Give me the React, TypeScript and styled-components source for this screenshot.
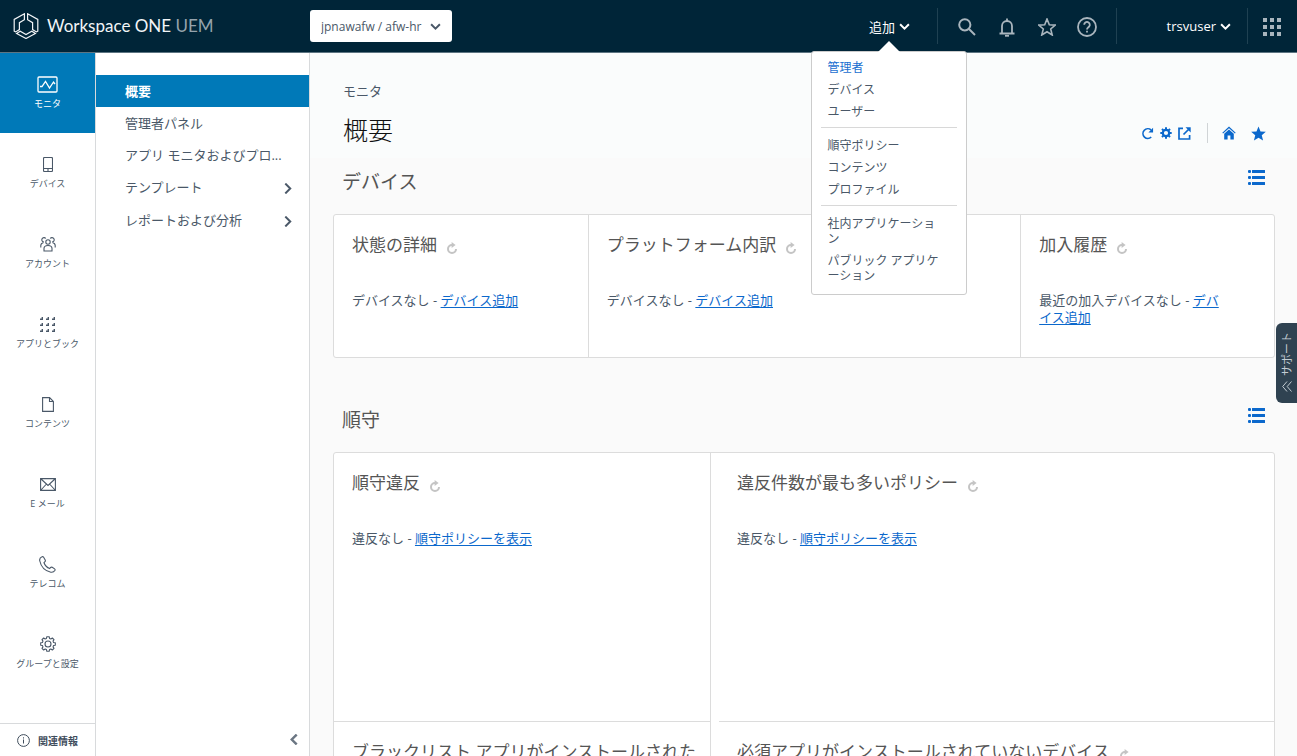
import React, { useState } from 'react';
import styled, { createGlobalStyle, css } from 'styled-components';

const GlobalStyle = createGlobalStyle`
  * { box-sizing: border-box; }
  body {
    margin: 0;
    font-family: "Open Sans", "Noto Sans CJK JP", sans-serif;
    font-size: 13px;
    color: #4a5868;
    background: #fafafa;
  }
  button, select { font: inherit; color: inherit; }
  button { border: 0; padding: 0; background: none; cursor: pointer; }
  ul { list-style: none; margin: 0; padding: 0; }
  h1, h2, h3, p { margin: 0; font-weight: 400; }
  svg { display: block; flex: none; }
`;

const Shell = styled.div`
  display: flex;
  flex-direction: column;
  height: 100vh;
  overflow: hidden;
`;

/* ---------- header ---------- */

const Header = styled.header`
  display: flex;
  align-items: center;
  flex: none;
  height: 53px;
  background: #002538;
  border-bottom: 1px solid #5d7582;
  color: #fff;
`;

const Brand = styled.a`
  display: flex;
  align-items: center;
  gap: 8px;
  flex: none;
  width: 310px;
  padding-left: 13px;
  color: #f2f5f7;
  font-family: Lato, "Open Sans", sans-serif;
  font-size: 17px;
  line-height: 24px;
  text-decoration: none;
  white-space: nowrap;
`;

const BrandSuffix = styled.span`
  color: #95a3ac;
`;

const OrgPicker = styled.label`
  position: relative;
  display: flex;
  align-items: center;
  height: 32px;
  background: #fff;
  border-radius: 3px;
  color: #4a5868;
  font-size: 12px;

  select {
    appearance: none;
    width: 142px;
    height: 32px;
    padding: 0 20px 0 11px;
    border: 0;
    background: transparent;
  }

  svg {
    position: absolute;
    right: 11px;
    pointer-events: none;
  }
`;

const HeaderTools = styled.div`
  display: flex;
  align-items: center;
  margin-left: auto;
  height: 36px;
`;

const HeaderGroup = styled.div`
  display: flex;
  align-items: center;
  height: 36px;
  padding: 0 9px;
  border-left: 1px solid #1f4152;
`;

const IconButton = styled.button`
  display: flex;
  align-items: center;
  justify-content: center;
  width: 40px;
  height: 36px;
  padding-top: 2px;
  color: #a9b5bd;
`;

const TextButton = styled.button`
  display: flex;
  align-items: center;
  gap: 4px;
  height: 36px;
  color: #fff;
`;

const AddWrap = styled.div`
  position: relative;
  margin-right: 27px;
`;

const UserGroup = styled(HeaderGroup)`
  justify-content: flex-end;
  min-width: 131px;
  padding: 0 16px;
`;

const AppsGroup = styled(HeaderGroup)`
  padding: 0 5px 0 4px;
`;

const Menu = styled.div`
  position: absolute;
  z-index: 10;
  top: 43px;
  left: 50%;
  width: 156px;
  padding: 5px 9px 7px;
  transform: translateX(-50%);
  background: #fff;
  border: 1px solid #ccc;
  border-radius: 3px;
  color: #4a5868;
  font-size: 12px;
  line-height: 15px;
  line-break: normal;

  &::before {
    content: "";
    position: absolute;
    top: -11px;
    left: 50%;
    margin-left: -11px;
    border: 11px solid transparent;
    border-top: 0;
    border-bottom-color: #fff;
  }

  ul + ul {
    margin-top: 4px;
    padding-top: 7px;
    border-top: 1px solid #d8d8d8;
  }
`;

const MenuLink = styled.a<{ $active?: boolean }>`
  display: block;
  padding: 3px 15px 4px 6px;
  color: ${(p) => (p.$active ? '#1a6fd0' : 'inherit')};
  text-decoration: none;
`;

/* ---------- navigation ---------- */

const Body = styled.div`
  display: flex;
  flex: 1;
  min-height: 0;
`;

const Rail = styled.nav`
  display: flex;
  flex-direction: column;
  flex: none;
  width: 96px;
  background: #fff;
  border-right: 1px solid #d8dadc;
`;

const RailLink = styled.a<{ $active?: boolean }>`
  display: flex;
  flex-direction: column;
  align-items: center;
  justify-content: center;
  gap: 4px;
  height: 80px;
  padding-bottom: 2px;
  color: #4a5868;
  font-size: 9px;
  line-height: 12px;
  text-decoration: none;
  ${(p) =>
    p.$active &&
    css`
      background: #0079b8;
      color: #fff;
    `}
`;

const RailIcon = styled.span`
  display: flex;
  align-items: center;
  justify-content: center;
  height: 20px;
`;

const AboutLink = styled.a`
  display: flex;
  align-items: center;
  gap: 8px;
  height: 33px;
  margin-top: auto;
  padding-left: 17px;
  border-top: 1px solid #d8dadc;
  color: #3f4d5c;
  font-size: 10px;
  font-weight: 700;
  text-decoration: none;
`;

const SubNav = styled.nav`
  display: flex;
  flex-direction: column;
  flex: none;
  width: 214px;
  padding-top: 22px;
  background: #fff;
  border-right: 1px solid #d8dadc;
`;

const SubLink = styled.a<{ $active?: boolean; $group?: boolean }>`
  display: flex;
  align-items: center;
  justify-content: space-between;
  height: ${(p) => (p.$group ? 33 : 32)}px;
  padding: 0 16px 2px 29px;
  color: #4a5868;
  text-decoration: none;
  white-space: nowrap;
  ${(p) =>
    p.$active &&
    css`
      background: #0079b8;
      color: #fff;
      font-weight: 700;
    `}

  svg {
    margin-top: 3px;
  }
`;

const CollapseButton = styled.button`
  display: flex;
  align-items: center;
  justify-content: center;
  align-self: flex-end;
  width: 30px;
  height: 33px;
  margin-top: auto;
  color: #6b7683;
`;

/* ---------- content ---------- */

const Main = styled.main`
  flex: 1;
  min-width: 0;
  overflow-y: auto;
  scrollbar-width: none;
`;

const PageHead = styled.div`
  display: flex;
  align-items: flex-end;
  justify-content: space-between;
  height: 105px;
  padding: 0 31px 9px 33px;
  background: #fafcfc;
`;

const Crumb = styled.p`
  line-height: 20px;
`;

const PageTitle = styled.h1`
  margin-top: 10px;
  color: #111;
  font-size: 25px;
  font-weight: 300;
  line-height: 38px;
`;

const Actions = styled.div`
  display: flex;
  align-items: center;
  height: 32px;
  color: #0b68cc;
`;

const ActionSet = styled.div`
  display: flex;
  align-items: center;
  gap: 6px;

  & + & {
    gap: 15px;
    height: 20px;
    margin-left: 16px;
    padding-left: 14px;
    border-left: 1px solid #d0d4d6;
  }
`;

const Section = styled.section`
  padding: 0 22px 0 23px;
  margin-bottom: 38px;
`;

const SectionHead = styled.div`
  display: flex;
  align-items: flex-start;
  justify-content: space-between;
  height: 56px;
  padding: 10px 10px 0 9px;
  color: #0b68cc;

  button {
    padding: 2px 0;
  }
`;

const SectionTitle = styled.h2`
  color: #555;
  font-size: 19px;
  line-height: 28px;
`;

const Panel = styled.div<{ $columns: string }>`
  display: grid;
  grid-template-columns: ${(p) => p.$columns};
  background: #fff;
  border: 1px solid #dcdcdc;
  border-radius: 3px;
`;

const Cell = styled.article<{ $tall?: boolean }>`
  min-height: ${(p) => (p.$tall ? 268 : 142)}px;
  padding: 17px 10px 0 18px;

  & + & {
    border-left: 1px solid #dcdcdc;
  }
`;

const Column = styled.div<{ $inset?: boolean }>`
  padding-left: ${(p) => (p.$inset ? 8 : 0)}px;

  & + & {
    border-left: 1px solid #dcdcdc;
  }

  ${Cell} + ${Cell} {
    border-left: 0;
    border-top: 1px solid #dcdcdc;
  }
`;

const CellTitle = styled.h3`
  color: #555;
  font-size: 17px;
  line-height: 26px;

  button {
    display: inline-block;
    margin-left: 9px;
    line-height: 12px;
    vertical-align: -3px;
    color: #c4c4c4;
  }
`;

const CellText = styled.p`
  margin-top: 34px;
  padding-right: 40px;
  line-height: 17px;
`;

const Link = styled.a`
  color: #0b68cc;
  text-decoration: underline;
  text-underline-offset: 2px;
`;

const SupportTab = styled.button`
  position: fixed;
  z-index: 5;
  top: 323px;
  right: 0;
  display: flex;
  flex-direction: column;
  align-items: center;
  justify-content: space-between;
  width: 21px;
  height: 80px;
  padding: 9px 0 11px;
  background: #2f4251;
  border-radius: 6px 0 0 6px;
  color: #c3ccd3;
  font-size: 11px;
  line-height: 16px;

  span {
    writing-mode: vertical-rl;
    text-orientation: sideways;
    transform: rotate(180deg);
  }
`;

/* ---------- icons ---------- */

type StrokeProps = { size?: number; w?: number; h?: number; box: string; sw?: number; children: React.ReactNode };

const Line = ({ size = 16, w, h, box, sw = 1, children }: StrokeProps) => (
  <svg width={w ?? size} height={h ?? size} viewBox={box} fill="none" stroke="currentColor" strokeWidth={sw} aria-hidden="true">
    {children}
  </svg>
);

const Chevron = ({ dir = 'down', size = 11, sw = 1.8 }: { dir?: 'down' | 'right' | 'left'; size?: number; sw?: number }) => {
  const d = { down: 'M1 3l4 4 4-4', right: 'M3 .5l4.500 4.500-4.500 4.500', left: 'M7 .5L2.500 5L7 9.500' }[dir];
  return (
    <Line size={size} box="0 0 10 10" sw={sw}>
      <path d={d} />
    </Line>
  );
};

const Logo = () => (
  <Line w={26} h={26} box="0 0 26 26" sw={1.2}>
    <path d="M11.400 .8L1.200 6.400V18.200l1.400.7 3.800-2.300V9.700l5-3z" />
    <path d="M14.600 .8L24.800 6.400V18.200l-1.400.7-3.800-2.300V9.700l-5-3z" />
    <path d="M3.600 20.500l3.600-2.200 5.800 3.200 5.800-3.200 3.600 2.200-9.400 5z" />
  </Line>
);

const GearPath = ({ cx = 8, cy = 8, outer = 7.4, inner = 5.8 }) => {
  const points: string[] = [];
  for (let i = 0; i < 8; i += 1) {
    [[-0.27, inner], [-0.16, outer], [0.16, outer], [0.27, inner]].forEach(([offset, r]) => {
      const a = (i * Math.PI) / 4 + offset;
      points.push(`${(cx + r * Math.sin(a)).toFixed(2)},${(cy - r * Math.cos(a)).toFixed(2)}`);
    });
  }
  return <polygon points={points.join(' ')} strokeLinejoin="round" />;
};

const railIcons: Record<string, React.ReactNode> = {
  monitor: (
    <Line w={21} h={17} box="0 0 21 17" sw={1.3}>
      <rect x="1" y="1" width="19" height="15" rx="1" />
      <path d="M3 10.500h2l3.500-5 4 6.500 4-6 1.500 2" />
    </Line>
  ),
  device: (
    <Line w={10} h={15} box="0 0 10 15" sw={1.1}>
      <rect x="0.5" y="0.5" width="9" height="14" rx="1" />
      <path d="M.5 11.500h9M5 12v2" />
    </Line>
  ),
  account: (
    <Line w={16} h={15} box="0 0 16 15" sw={1.1}>
      <circle cx="8" cy="5" r="2.200" />
      <path d="M4 14V11.500a4 3 0 018 0V14zM4 5A2.200 2.200 0 115.800 1.500M12 5a2.200 2.200 0 10-1.800-3.500M.8 10.500V8.500a3 3 0 012.500-2.800M15.200 10.500V8.500a3 3 0 00-2.500-2.800" />
    </Line>
  ),
  apps: (
    <svg width="15" height="15" viewBox="0 0 15 15" fill="currentColor" aria-hidden="true">
      {[0, 6, 12].map((y) => [0, 6, 12].map((x) => <path key={`${x}-${y}`} d={`M${x + 3} ${y}v3h-3v-1.400h1.600V${y}z`} />))}
    </svg>
  ),
  content: (
    <Line w={12} h={15} box="0 0 12 15" sw={1.1}>
      <path d="M.6.6h7l3.800 3.900v9.900H.6zM7.500.5v4h4" />
    </Line>
  ),
  mail: (
    <Line w={16} h={13} box="0 0 16 13" sw={1.1}>
      <path d="M.6.6h14.800v11.800H.6zM.5.5L8 7.500l7.500-7M.5 12.500l5.500-6M15.500 12.500l-5.500-6" />
    </Line>
  ),
  telecom: (
    <Line w={17} h={17} box="0 0 17 17" sw={1.1}>
      <path d="M3 .8C1.200 1.500.3 3 .8 5c1.200 5.500 5.500 10 11 11.200 1.800.3 3.300-.4 4.200-1.900.3-.6.1-1-.4-1.400l-2.400-1.600c-.6-.4-1.100-.3-1.600.2l-.9 1c-2.700-1-4.800-3.200-5.700-5.800l1-1c.5-.5.500-1 .2-1.600L4.500 1.100C4.100.6 3.600.5 3 .8z" />
    </Line>
  ),
  settings: (
    <Line size={16} box="0 0 16 16" sw={1.1}>
      <GearPath />
      <circle cx="8" cy="8" r="3" />
    </Line>
  ),
};

const starPoints = '9,1 11.3,6.700 17.300,7.100 12.700,11 14.200,17 9,13.700 3.800,17 5.300,11 0.700,7.100 6.700,6.700';

const SearchIcon = () => (
  <Line size={18} box="0 0 18 18" sw={2}>
    <circle cx="6.800" cy="6.800" r="5.600" />
    <path d="M11 11l6 6" />
  </Line>
);

const BellIcon = () => (
  <Line w={16} h={19} box="0 0 16 19" sw={1.8}>
    <path d="M3 15V8a5 5 0 0110 0v7M.5 15.500h15M8 .5v2.500" />
    <path d="M6 17.800h4" />
  </Line>
);

const StarIcon = () => (
  <Line size={18} box="0 0 18 18" sw={1.6}>
    <polygon points={starPoints} />
  </Line>
);

const HelpIcon = () => (
  <Line size={20} box="0 0 20 20" sw={1.8}>
    <circle cx="10" cy="10" r="9" />
    <path d="M7.200 7.800a2.800 2.800 0 115 1.700c-1 1-2.200 1.400-2.200 2.900M10 13.800v1.800" />
  </Line>
);

const AppGridIcon = () => (
  <svg width="18" height="18" viewBox="0 0 18 18" fill="currentColor" aria-hidden="true">
    {[0, 7, 14].map((y) => [0, 7, 14].map((x) => <rect key={`${x}-${y}`} x={x} y={y} width="4" height="4" />))}
  </svg>
);

const ReloadIcon = () => (
  <Line w={13} h={13} box="0 0 14 14" sw={1.8}>
    <path d="M11 10.800A5.200 5.200 0 1110.800 3.200" />
    <path d="M13 .8v5H8l5-5z" fill="currentColor" stroke="none" />
  </Line>
);

const SmallGearIcon = () => (
  <svg width="12" height="12" viewBox="0 0 12 12" fill="none" stroke="currentColor" aria-hidden="true">
    <circle cx="6" cy="6" r="3.200" strokeWidth="2.200" />
    {[0, 45, 90, 135].map((angle) => (
      <path key={angle} d="M6 .3v2M6 9.700v2" strokeWidth="2" transform={`rotate(${angle} 6 6)`} />
    ))}
  </svg>
);

const ExternalIcon = () => (
  <Line size={13} box="0 0 13 13" sw={1.7}>
    <path d="M5 1.400H1v10.600h10.600V8M5.500 7.500l5-5" />
    <path d="M7.500 .3h5.200V5.500z" fill="currentColor" stroke="none" />
  </Line>
);

const HomeIcon = () => (
  <svg width="14" height="14" viewBox="0 0 14 14" fill="currentColor" aria-hidden="true">
    <path d="M7 .5L.3 6.800l.8.8L7 2.200l5.900 5.400.8-.8zM7 3.400L2.200 7.800V13.500h3.400V9.500h2.800v4h3.400V7.800z" />
  </svg>
);

const SolidStarIcon = () => (
  <svg width="15" height="15" viewBox="0.5 0.5 17 17" fill="currentColor" aria-hidden="true">
    <polygon points={starPoints} />
  </svg>
);

const ListIcon = () => (
  <svg width="17" height="15" viewBox="0 0 17 15" fill="currentColor" aria-hidden="true">
    {[0, 6, 12].map((y) => (
      <g key={y}>
        <rect x="0" y={y} width="3" height="3" rx="1" />
        <rect x="4" y={y} width="13" height="3" rx="0.3" />
      </g>
    ))}
  </svg>
);

const CellReloadIcon = () => (
  <Line w={12} h={12} box="0 0 12 12" sw={2}>
    <path d="M7 3H6A4 4 0 1010 7" />
    <path d="M5.600 0v6l4-3z" fill="currentColor" stroke="none" />
  </Line>
);

const InfoIcon = () => (
  <Line size={13} box="0 0 13 13">
    <circle cx="6.500" cy="6.500" r="5.900" />
    <path d="M6.500 5.500v4M6.500 3.300v1.200" />
  </Line>
);

/* ---------- data ---------- */

const railItems = [
  { id: 'monitor', label: 'モニタ' },
  { id: 'device', label: 'デバイス' },
  { id: 'account', label: 'アカウント' },
  { id: 'apps', label: 'アプリとブック' },
  { id: 'content', label: 'コンテンツ' },
  { id: 'mail', label: 'E メール' },
  { id: 'telecom', label: 'テレコム' },
  { id: 'settings', label: 'グループと設定' },
];

const subItems = [
  { label: '概要', active: true },
  { label: '管理者パネル' },
  { label: 'アプリ モニタおよびプロ...' },
  { label: 'テンプレート', group: true },
  { label: 'レポートおよび分析', group: true },
];

const addMenu = [
  ['管理者', 'デバイス', 'ユーザー'],
  ['順守ポリシー', 'コンテンツ', 'プロファイル'],
  ['社内アプリケーション', 'パブリック アプリケーション'],
];

const deviceCards = [
  { title: '状態の詳細', empty: 'デバイスなし', link: 'デバイス追加' },
  { title: 'プラットフォーム内訳', empty: 'デバイスなし', link: 'デバイス追加' },
  { title: '加入履歴', empty: '最近の加入デバイスなし', link: 'デバイス追加' },
];

const complianceColumns = [
  [
    { title: '順守違反', empty: '違反なし', link: '順守ポリシーを表示' },
    { title: 'ブラックリスト アプリがインストールされたデバイス', empty: 'デバイスなし', link: 'デバイス追加' },
  ],
  [
    { title: '違反件数が最も多いポリシー', empty: '違反なし', link: '順守ポリシーを表示' },
    { title: '必須アプリがインストールされていないデバイス', empty: 'デバイスなし', link: 'デバイス追加' },
  ],
];

type Card = { title: string; empty: string; link: string };

const CardCell = ({ card, tall }: { card: Card; tall?: boolean }) => (
  <Cell $tall={tall}>
    <CellTitle>
      {card.title}
      <button type="button" aria-label="更新">
        <CellReloadIcon />
      </button>
    </CellTitle>
    <CellText>
      {card.empty} - <Link href="#">{card.link}</Link>
    </CellText>
  </Cell>
);

export default function App() {
  const [menuOpen, setMenuOpen] = useState(true);

  return (
    <Shell lang="ja">
      <GlobalStyle />
      <Header>
        <Brand href="#">
          <Logo />
          <span>
            Workspace ONE <BrandSuffix>UEM</BrandSuffix>
          </span>
        </Brand>
        <OrgPicker>
          <select aria-label="組織グループ">
            <option>jpnawafw / afw-hr</option>
          </select>
          <Chevron />
        </OrgPicker>
        <HeaderTools>
          <AddWrap>
            <TextButton type="button" aria-haspopup="menu" aria-expanded={menuOpen} onClick={() => setMenuOpen(!menuOpen)}>
              追加
              <Chevron />
            </TextButton>
            {menuOpen && (
              <Menu>
                {addMenu.map((group) => (
                  <ul key={group[0]}>
                    {group.map((label) => (
                      <li key={label}>
                        <MenuLink href="#" $active={label === '管理者'}>
                          {label}
                        </MenuLink>
                      </li>
                    ))}
                  </ul>
                ))}
              </Menu>
            )}
          </AddWrap>
          <HeaderGroup>
            <IconButton type="button" aria-label="検索"><SearchIcon /></IconButton>
            <IconButton type="button" aria-label="通知"><BellIcon /></IconButton>
            <IconButton type="button" aria-label="お気に入り"><StarIcon /></IconButton>
            <IconButton type="button" aria-label="ヘルプ"><HelpIcon /></IconButton>
          </HeaderGroup>
          <UserGroup>
            <TextButton type="button">
              trsvuser
              <Chevron />
            </TextButton>
          </UserGroup>
          <AppsGroup>
            <IconButton type="button" aria-label="アプリ一覧"><AppGridIcon /></IconButton>
          </AppsGroup>
        </HeaderTools>
      </Header>

      <Body>
        <Rail>
          {railItems.map((item) => (
            <RailLink key={item.id} href="#" $active={item.id === 'monitor'}>
              <RailIcon>{railIcons[item.id]}</RailIcon>
              {item.label}
            </RailLink>
          ))}
          <AboutLink href="#">
            <InfoIcon />
            関連情報
          </AboutLink>
        </Rail>

        <SubNav>
          {subItems.map((item) => (
            <SubLink key={item.label} href="#" $active={item.active} $group={item.group}>
              {item.label}
              {item.group && <Chevron dir="right" />}
            </SubLink>
          ))}
          <CollapseButton type="button" aria-label="折りたたむ">
            <Chevron dir="left" sw={2.2} />
          </CollapseButton>
        </SubNav>

        <Main>
          <PageHead>
            <div>
              <Crumb>モニタ</Crumb>
              <PageTitle>概要</PageTitle>
            </div>
            <Actions>
              <ActionSet>
                <button type="button" aria-label="更新"><ReloadIcon /></button>
                <button type="button" aria-label="設定"><SmallGearIcon /></button>
                <button type="button" aria-label="エクスポート"><ExternalIcon /></button>
              </ActionSet>
              <ActionSet>
                <button type="button" aria-label="ホーム"><HomeIcon /></button>
                <button type="button" aria-label="お気に入りに追加"><SolidStarIcon /></button>
              </ActionSet>
            </Actions>
          </PageHead>

          <Section>
            <SectionHead>
              <SectionTitle>デバイス</SectionTitle>
              <button type="button" aria-label="リスト表示"><ListIcon /></button>
            </SectionHead>
            <Panel $columns="27fr 46fr 27fr">
              {deviceCards.map((card) => (
                <CardCell key={card.title} card={card} />
              ))}
            </Panel>
          </Section>

          <Section>
            <SectionHead>
              <SectionTitle>順守</SectionTitle>
              <button type="button" aria-label="リスト表示"><ListIcon /></button>
            </SectionHead>
            <Panel $columns="2fr 3fr">
              {complianceColumns.map((cards, i) => (
                <Column key={cards[0].title} $inset={i === 1}>
                  {cards.map((card) => (
                    <CardCell key={card.title} card={card} tall />
                  ))}
                </Column>
              ))}
            </Panel>
          </Section>
        </Main>
      </Body>

      <SupportTab type="button">
        <span>サポート</span>
        <Line w={10} h={11} box="0 0 10 11">
          <path d="M5 .5l-4.300 5 4.300 5M9.500.5l-4.300 5 4.300 5" />
        </Line>
      </SupportTab>
    </Shell>
  );
}
